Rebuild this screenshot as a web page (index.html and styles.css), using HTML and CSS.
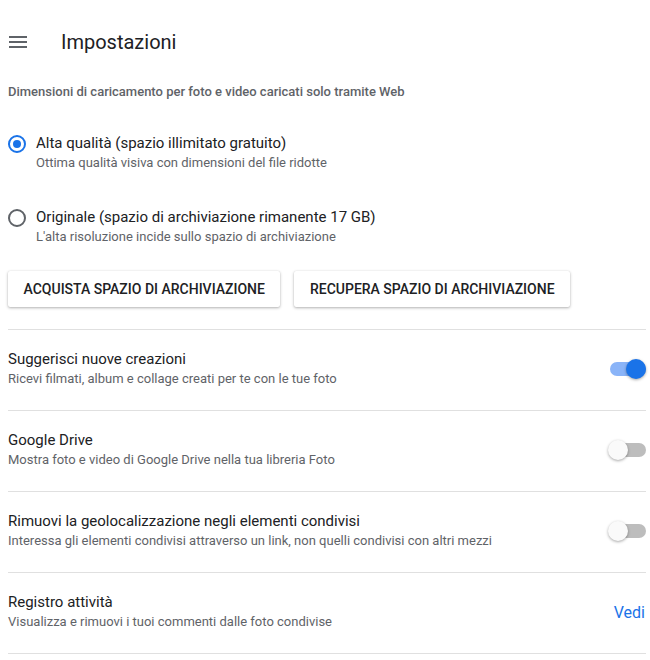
FILE: index.html
```html
<!DOCTYPE html>
<html lang="it">
<head>
<meta charset="utf-8">
<title>Impostazioni</title>
<link rel="stylesheet" href="styles.css">
</head>
<body>
<div class="page">
  <header class="header">
    <span class="menu" aria-label="Menu"><i></i><i></i><i></i></span>
    <h1 class="title">Impostazioni</h1>
  </header>

  <div class="section-label">Dimensioni di caricamento per foto e video caricati solo tramite Web</div>

  <label class="radio-option first">
    <span class="radio checked"></span>
    <span class="texts">
      <span class="opt-title">Alta qualità (spazio illimitato gratuito)</span>
      <span class="opt-sub">Ottima qualità visiva con dimensioni del file ridotte</span>
    </span>
  </label>

  <label class="radio-option second">
    <span class="radio"></span>
    <span class="texts">
      <span class="opt-title">Originale (spazio di archiviazione rimanente 17 GB)</span>
      <span class="opt-sub">L'alta risoluzione incide sullo spazio di archiviazione</span>
    </span>
  </label>

  <div class="buttons">
    <button class="btn">ACQUISTA SPAZIO DI ARCHIVIAZIONE</button>
    <button class="btn">RECUPERA SPAZIO DI ARCHIVIAZIONE</button>
  </div>

  <div class="rows">
    <div class="row">
      <div class="texts">
        <span class="opt-title">Suggerisci nuove creazioni</span>
        <span class="opt-sub">Ricevi filmati, album e collage creati per te con le tue foto</span>
      </div>
      <span class="toggle on"><span class="track"></span><span class="thumb"></span></span>
    </div>
    <div class="row">
      <div class="texts">
        <span class="opt-title">Google Drive</span>
        <span class="opt-sub">Mostra foto e video di Google Drive nella tua libreria Foto</span>
      </div>
      <span class="toggle"><span class="track"></span><span class="thumb"></span></span>
    </div>
    <div class="row">
      <div class="texts">
        <span class="opt-title">Rimuovi la geolocalizzazione negli elementi condivisi</span>
        <span class="opt-sub">Interessa gli elementi condivisi attraverso un link, non quelli condivisi con altri mezzi</span>
      </div>
      <span class="toggle"><span class="track"></span><span class="thumb"></span></span>
    </div>
    <div class="row">
      <div class="texts">
        <span class="opt-title">Registro attività</span>
        <span class="opt-sub">Visualizza e rimuovi i tuoi commenti dalle foto condivise</span>
      </div>
      <a class="link" href="#">Vedi</a>
    </div>
  </div>
</div>
</body>
</html>
```
FILE: styles.css
```css
* { box-sizing: border-box; }
html, body { margin: 0; padding: 0; background: #fff; }
body {
  font-family: Roboto, "Liberation Sans", Arial, sans-serif;
  color: #202124;
}
.page { padding: 0 4px 0 8px; }

.header {
  height: 84px;
  display: flex;
  align-items: center;
}
.menu {
  display: flex;
  flex-direction: column;
  gap: 3px;
  width: 18px;
  margin-left: 1px;
  margin-right: 34px;
}
.menu i {
  display: block;
  height: 2px;
  background: #5f6368;
}
.title {
  margin: 0;
  font-size: 20px;
  font-weight: 400;
  color: #202124;
  line-height: 28px;
}

.section-label {
  font-size: 13px;
  font-weight: 500;
  line-height: 16px;
  color: #5f6368;
}

.radio-option {
  display: flex;
  align-items: flex-start;
}
.radio-option.first { margin-top: 33px; }
.radio-option.second { margin-top: 34px; }
.radio {
  flex: none;
  width: 18px;
  height: 18px;
  margin: 2px 10px 0 0;
  border: 2px solid #5f6368;
  border-radius: 50%;
  position: relative;
}
.radio.checked { border-color: #1a73e8; }
.radio.checked::after {
  content: "";
  position: absolute;
  left: 3px; top: 3px;
  width: 8px; height: 8px;
  border-radius: 50%;
  background: #1a73e8;
}
.texts { display: flex; flex-direction: column; }
.opt-title {
  font-size: 15px;
  line-height: 20px;
  color: #202124;
}
.opt-sub {
  font-size: 13px;
  line-height: 20px;
  color: #5f6368;
}

.buttons {
  display: flex;
  gap: 14px;
  margin-top: 24px;
}
.btn {
  height: 36px;
  padding: 0 15.5px;
  border: none;
  border-radius: 2px;
  background: #fff;
  font-family: inherit;
  font-size: 14px;
  font-weight: 500;
  color: #202124;
  box-shadow: 0 1px 3px rgba(0,0,0,0.3), 0 0 1px rgba(0,0,0,0.12);
  cursor: pointer;
}

.rows { margin-top: 22px; }
.row {
  display: flex;
  align-items: center;
  justify-content: space-between;
  border-top: 1px solid #e0e0e0;
  padding: 19px 0 21px;
}
.row:last-child { border-bottom: 1px solid #e0e0e0; }

.toggle {
  position: relative;
  width: 38px;
  height: 20px;
  flex: none;
}
.track {
  position: absolute;
  left: 2px; right: 0; top: 3px;
  height: 14px;
  border-radius: 7px;
  background: #bdbdbd;
}
.thumb {
  position: absolute;
  top: 0; left: 0;
  width: 20px; height: 20px;
  border-radius: 50%;
  background: #fafafa;
  box-shadow: 0 1px 3px rgba(0,0,0,0.35);
}
.toggle.on .track { background: #8ab4f8; }
.toggle.on .thumb { left: auto; right: 0; background: #1a73e8; }

.link {
  font-size: 16px;
  color: #1a73e8;
  text-decoration: none;
  margin-right: 1px;
}
```
